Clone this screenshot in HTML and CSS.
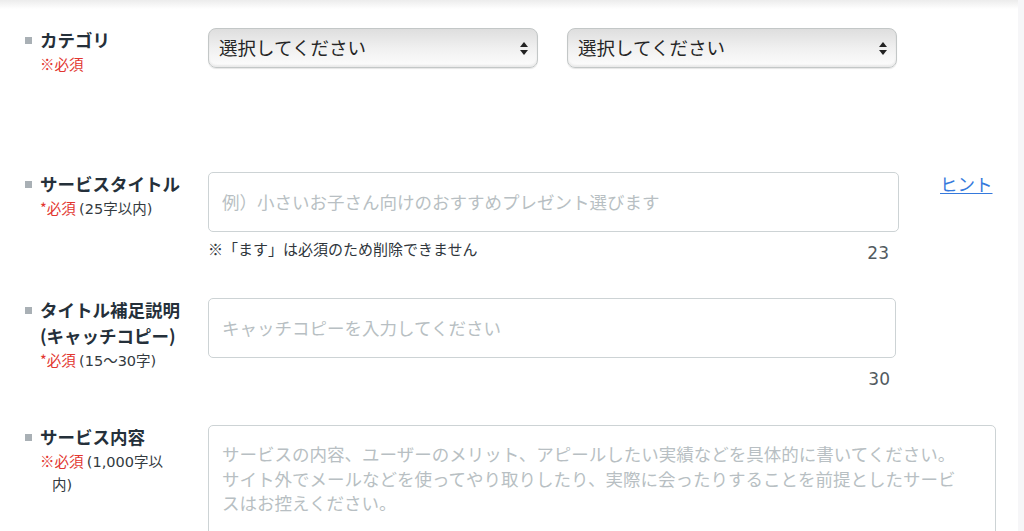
FILE: index.html
```html
<!DOCTYPE html>
<html lang="ja">
<head>
<meta charset="utf-8">
<title>サービス登録</title>
<link rel="stylesheet" href="styles.css">
</head>
<body>
<div class="page">
  <main class="form">
    <div class="row row-cat">
      <div class="label">
        <span class="bullet"></span>
        <div class="label-text">
          <div class="title">カテゴリ</div>
          <div class="req"><span class="red">※必須</span></div>
        </div>
      </div>
      <div class="selects">
        <div class="select"><span>選択してください</span>
          <svg width="8" height="13" viewBox="0 0 8 13"><path d="M4 0 L8 5 L0 5 Z" fill="#222"/><path d="M0 8 L8 8 L4 13 Z" fill="#222"/></svg>
        </div>
        <div class="select"><span>選択してください</span>
          <svg width="8" height="13" viewBox="0 0 8 13"><path d="M4 0 L8 5 L0 5 Z" fill="#222"/><path d="M0 8 L8 8 L4 13 Z" fill="#222"/></svg>
        </div>
      </div>
    </div>

    <div class="row row-title">
      <div class="label">
        <span class="bullet"></span>
        <div class="label-text">
          <div class="title">サービスタイトル</div>
          <div class="req"><span class="red">*必須</span> <span class="lim">(25字以内)</span></div>
        </div>
      </div>
      <div class="field field-title">
        <input class="text-input" type="text" placeholder="例）小さいお子さん向けのおすすめプレゼント選びます">
        <div class="under">
          <span class="note">※「ます」は必須のため削除できません</span>
          <span class="count count-title">23</span>
        </div>
      </div>
      <a class="hint" href="#">ヒント</a>
    </div>

    <div class="row row-catch">
      <div class="label">
        <span class="bullet"></span>
        <div class="label-text">
          <div class="title">タイトル補足説明<br>(キャッチコピー)</div>
          <div class="req"><span class="red">*必須</span> <span class="lim">(15〜30字)</span></div>
        </div>
      </div>
      <div class="field field-catch">
        <input class="text-input" type="text" placeholder="キャッチコピーを入力してください">
        <div class="under under-end">
          <span class="count count-catch">30</span>
        </div>
      </div>
    </div>

    <div class="row row-body">
      <div class="label">
        <span class="bullet"></span>
        <div class="label-text">
          <div class="title">サービス内容</div>
          <div class="req req-narrow"><span class="red">※必須</span> <span class="lim">(1,000字以</span>内<span class="lim">)</span></div>
        </div>
      </div>
      <div class="field field-body">
        <textarea class="text-area" placeholder="サービスの内容、ユーザーのメリット、アピールしたい実績などを具体的に書いてください。サイト外でメールなどを使ってやり取りしたり、実際に会ったりすることを前提としたサービスはお控えください。"></textarea>
      </div>
    </div>
  </main>
  <aside class="side"></aside>
</div>
</body>
</html>
```

FILE: styles.css
```css
html, body {
  margin: 0;
  padding: 0;
}
body {
  font-family: "Noto Sans CJK JP", sans-serif;
  color: #2b3540;
  background: #fff;
  overflow: hidden;
}
.page {
  display: flex;
  height: 531px;
  background: linear-gradient(#ececec, #fff 9px);
}
.form {
  flex: 1;
  padding: 28px 0 0 25px;
}
.side {
  width: 6px;
  background: #f6f6f8;
}
.row {
  display: flex;
  align-items: flex-start;
}
.label {
  width: 183px;
  flex-shrink: 0;
  display: flex;
  gap: 8px;
  margin-top: -1px;
}
.bullet {
  width: 7px;
  height: 7px;
  margin-top: 10px;
  background: #a9b0b5;
  flex-shrink: 0;
}
.label-text {
  width: 145px;
}
.title {
  font-size: 17.5px;
  font-weight: 700;
  line-height: 26px;
  color: #25303a;
}
.req {
  font-size: 14.5px;
  line-height: 22px;
  color: #333a40;
  padding-left: 12px;
  text-indent: -12px;
}
.lim {
  font-family: "DejaVu Sans", "Noto Sans CJK JP", sans-serif;
  font-size: 14.5px;
}
.req-narrow {
  width: 118px;
}
.red {
  color: #e2362f;
}

/* category */
.row-cat {
  margin-bottom: 97px;
}
.selects {
  display: flex;
  gap: 29px;
}
.select {
  width: 330px;
  height: 40px;
  box-sizing: border-box;
  border: 1px solid #c3c7c7;
  border-radius: 8px;
  background: linear-gradient(#dedede, #f0f0f0 50%, #fcfcfc);
  box-shadow: inset 0 -2px 2px rgba(0, 0, 0, 0.07), 0 1px 1px rgba(0, 0, 0, 0.1);
  display: flex;
  align-items: center;
  justify-content: space-between;
  padding: 0 9px 2px 10px;
  font-size: 18.5px;
  color: #262626;
}
.select svg {
  margin-top: 2px;
}

/* fields */
.field {
  flex-shrink: 0;
}
.field-title { width: 691px; }
.field-catch { width: 688px; }
.field-body { width: 788px; }

.text-input {
  display: block;
  width: 100%;
  height: 60px;
  box-sizing: border-box;
  border: 1px solid #cdd3d5;
  border-radius: 5px;
  padding: 0 13px 2px;
  font-family: inherit;
  font-size: 17.5px;
  color: #333;
  background: #fff;
  outline: none;
}
.text-input::placeholder,
.text-area::placeholder {
  color: #b8bfc3;
  opacity: 1;
}
.under {
  display: flex;
  justify-content: space-between;
  align-items: flex-start;
  margin-top: 6px;
}
.under-end {
  justify-content: flex-end;
}
.note {
  font-size: 15px;
  line-height: 22px;
  color: #2f363c;
}
.count {
  font-family: "DejaVu Sans", "Noto Sans CJK JP", sans-serif;
  font-size: 17px;
  line-height: 24px;
  padding-top: 3px;
  color: #525a60;
}
.count-title { padding-right: 10px; }
.count-catch { padding-right: 6px; }

.hint {
  margin-left: 41px;
  margin-top: -1px;
  font-size: 17.5px;
  line-height: 26px;
  color: #3579dc;
  text-decoration: underline;
  text-underline-offset: 2px;
}

.row-title { margin-bottom: 33px; }
.row-catch { margin-bottom: 34px; }

.text-area {
  display: block;
  width: 100%;
  height: 130px;
  box-sizing: border-box;
  border: 1px solid #cdd3d5;
  border-radius: 5px;
  padding: 16px 27px 16px 13px;
  font-family: inherit;
  font-size: 17.5px;
  line-height: 24.5px;
  resize: none;
  background: #fff;
  outline: none;
}
```
